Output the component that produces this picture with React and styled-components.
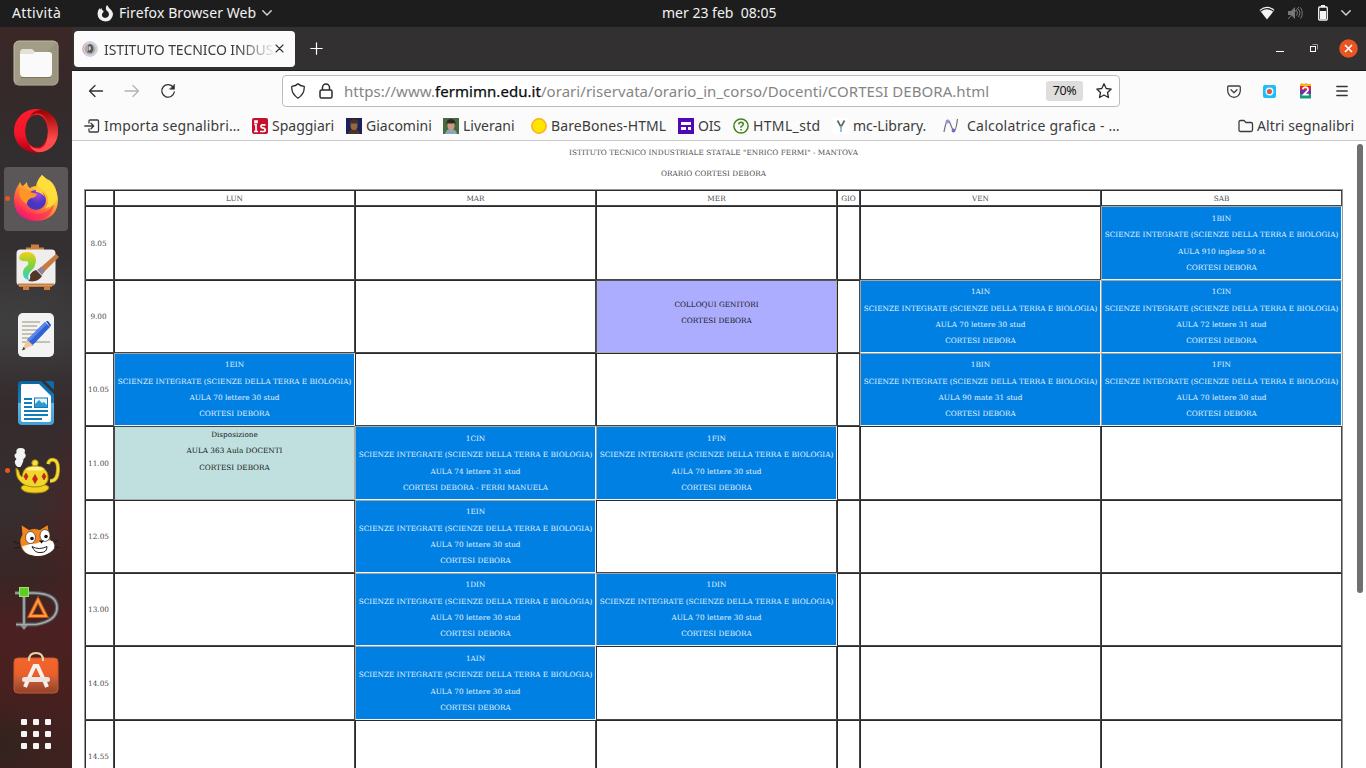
import React from "react";
import styled, { createGlobalStyle } from "styled-components";

const Global = createGlobalStyle`
  * { box-sizing: border-box; }
  body { margin: 0; overflow: hidden; background: #fff; }
  svg { display: block; flex: none; }
`;

const Desktop = styled.div`
  width: 1366px;
  height: 768px;
  display: flex;
  flex-direction: column;
  overflow: hidden;
  font-family: "Noto Sans", "Open Sans", sans-serif;
`;

/* Fixed-advance label: w reserves the slot, size and ls tune the face */
const Label = styled.span`
  display: block;
  flex: none;
  width: ${(p) => p.$w}px;
  font-size: ${(p) => p.$size || 14}px;
  letter-spacing: ${(p) => p.$ls || 0}px;
  line-height: 20px;
  white-space: pre;
  color: ${(p) => p.$color || "inherit"};
`;

const Spacer = styled.span`
  flex: none;
  width: ${(p) => p.$w}px;
`;

const TopBar = styled.header`
  height: 27px;
  flex: none;
  display: flex;
  align-items: center;
  background: #1d1d1d;
  color: #f2f2f2;
  padding: 0 15px 1px 12px;
`;
const AppMenu = styled.div`
  display: flex;
  align-items: center;
  gap: 5px;
  margin-left: 34px;
`;
const Clock = styled.div`
  display: flex;
  margin-left: 390px;
`;
const Tray = styled.div`
  display: flex;
  align-items: center;
  margin-left: auto;
`;

const Workspace = styled.div`
  display: flex;
  flex: 1;
  min-height: 0;
`;

const Dock = styled.nav`
  width: 72px;
  flex: none;
  display: flex;
  flex-direction: column;
  align-items: center;
  padding-top: 4px;
  gap: 4px;
  background:
    radial-gradient(ellipse 50px 40px at 0px 715px, rgba(40, 36, 28, 0.6), transparent),
    radial-gradient(ellipse 50px 100px at 80px 490px, rgba(110, 20, 20, 0.35), transparent),
    radial-gradient(ellipse 90px 70px at 20px 290px, rgba(80, 85, 85, 0.3), transparent),
    linear-gradient(#3b2827 0, #352929 60px, #322d2e 120px, #343032 220px, #3a3738 310px, #352b2d 380px, #372e30 480px, #3a2525 550px, #4c2022 600px, #47201f 660px, #3c2220 741px);
`;
const DockItem = styled.div`
  position: relative;
  width: 64px;
  height: ${(p) => p.$h || 64}px;
  flex: none;
  display: flex;
  align-items: center;
  justify-content: center;
  border-radius: 4px;
  background: ${(p) => (p.$active ? "#5b5657" : "transparent")};
`;
const RunningDot = styled.i`
  position: absolute;
  left: 0.5px;
  top: 29px;
  width: 5px;
  height: 5px;
  border-radius: 50%;
  background: #e95420;
`;

const Browser = styled.main`
  flex: 1;
  min-width: 0;
  display: flex;
  flex-direction: column;
  background: #fff;
`;
const TabStrip = styled.div`
  height: 44px;
  flex: none;
  display: flex;
  align-items: center;
  padding: 0 8px 0 2px;
  background: #323031;
  border-bottom: 1px solid #1c1a1e;
  color: #fff;
`;
const Tab = styled.div`
  width: 221px;
  height: 36px;
  display: flex;
  align-items: center;
  padding: 0 11px 0 8px;
  border-radius: 4px;
  background: #fbfbfb;
  color: #3d3d3d;
`;
const TabTitle = styled.div`
  width: 169px;
  margin: 0 2px 0 6px;
  padding-top: 2px;
  overflow: hidden;
  mask-image: linear-gradient(90deg, #000 135px, transparent 172px);
`;
const NewTab = styled.div`
  margin-left: 15px;
`;
const WindowButtons = styled.div`
  display: flex;
  align-items: center;
  margin-left: auto;
`;
const Toolbar = styled.div`
  height: 41px;
  flex: none;
  display: flex;
  align-items: center;
  padding: 0 18px 1px 16px;
  background: #fbfbfb;
`;
const UrlBar = styled.div`
  width: 838px;
  height: 32px;
  margin-left: 106px;
  display: flex;
  align-items: center;
  padding: 0 7px 0 8px;
  border: 1px solid #bcbcbc;
  border-radius: 4px;
  background: #fff;
`;
const UrlText = styled.div`
  width: 702px;
  margin-left: 11px;
  font-size: 15px;
  line-height: 20px;
  letter-spacing: 0.045px;
  white-space: pre;
  color: #858585;
  b { font-weight: 400; color: #0c0c0d; -webkit-text-stroke: 0.25px #0c0c0d; }
`;
const ZoomBadge = styled.div`
  width: 37px;
  height: 20px;
  border-radius: 3px;
  background: #dedede;
  color: #151515;
  font-size: 12.5px;
  line-height: 20px;
  text-align: center;
  letter-spacing: -0.4px;
`;
const Bookmarks = styled.div`
  height: 29px;
  flex: none;
  display: flex;
  align-items: center;
  padding: 0 0 1px 12px;
  background: #fbfbfb;
  color: #3b3b3b;
`;
const Divider = styled.div`
  height: 1px;
  flex: none;
  background: #c8c8c8;
  margin-top: -1px;
  position: relative;
`;
const Bookmark = styled.div`
  display: flex;
  align-items: center;
  flex: none;
  gap: ${(p) => p.$gap ?? 4}px;
  margin-left: ${(p) => p.$ml || 0}px;
`;

const Page = styled.section`
  flex: 1;
  min-height: 0;
  position: relative;
  overflow: hidden;
  padding: 0 23px 0 12px;
  background: #fff;
  font-family: "DejaVu Serif", serif;
  font-size: 7.3px;
  color: #4a4a4a;
`;
const Heading = styled.p`
  margin: 0;
  height: 21px;
  line-height: 23px;
  text-align: center;
  letter-spacing: 0.04px;
`;
const Grid = styled.div`
  width: 1259px;
  margin-top: 6px;
  display: grid;
  grid-template-columns: 29px 241px 241px 241px 23px 241px 241px;
  grid-template-rows: 16px 74px 73px 73px 74px 73px 73px 74px 73px;
  border: 1px solid #999;
`;
const kinds = {
  empty: { bg: "#fff", fg: "#4a4a4a", tl: "#2a2a2a", br: "#474747" },
  lesson: { bg: "#0080e3", fg: "#e4f3ff", tl: "#a5a5a5", br: "#f4f4f4" },
  talk: { bg: "#adadff", fg: "#151515", tl: "#555", br: "#aaa" },
  standby: { bg: "#c0e0df", fg: "#151515", tl: "#444", br: "#aaa" },
};
const Cell = styled.div`
  display: flex;
  flex-direction: column;
  align-items: center;
  justify-content: ${(p) => (p.$kind === "standby" ? "flex-start" : "center")};
  padding: ${(p) => (p.$kind === "standby" || p.$time ? 0 : 1)}px ${(p) => (p.$time ? 2 : 0)}px ${(p) => (p.$kind === "talk" ? 8 : 0)}px 0;
  line-height: ${(p) => (p.$kind === "empty" ? 13 : 16.4)}px;
  white-space: nowrap;
  background: ${(p) => kinds[p.$kind].bg};
  color: ${(p) => kinds[p.$kind].fg};
  border: 1px solid;
  border-color: ${(p) => `${kinds[p.$kind].tl} ${kinds[p.$kind].br} ${kinds[p.$kind].br} ${kinds[p.$kind].tl}`};
`;
const Scrollbar = styled.div`
  position: absolute;
  right: 3px;
  top: 3px;
  width: 6px;
  height: 449px;
  border-radius: 3px;
  background: #707070;
`;

const SUBJECT = "SCIENZE INTEGRATE (SCIENZE DELLA TERRA E BIOLOGIA)";
const lesson = (cls, room, who = "CORTESI DEBORA") => ({ kind: "lesson", lines: [cls, SUBJECT, room, who] });
const R70 = "AULA 70 lettere 30 stud";
const rows = [
  ["8.05", null, null, null, null, null, lesson("1BIN", "AULA 910 inglese 50 st")],
  ["9.00", null, null, { kind: "talk", lines: ["COLLOQUI GENITORI", "CORTESI DEBORA"] }, null, lesson("1AIN", R70), lesson("1CIN", "AULA 72 lettere 31 stud")],
  ["10.05", lesson("1EIN", R70), null, null, null, lesson("1BIN", "AULA 90 mate 31 stud"), lesson("1FIN", R70)],
  ["11.00", { kind: "standby", lines: ["Disposizione", "AULA 363 Aula DOCENTI", "CORTESI DEBORA"] }, lesson("1CIN", "AULA 74 lettere 31 stud", "CORTESI DEBORA - FERRI MANUELA"), lesson("1FIN", R70), null, null, null],
  ["12.05", null, lesson("1EIN", R70), null, null, null, null],
  ["13.00", null, lesson("1DIN", R70), lesson("1DIN", R70), null, null, null],
  ["14.05", null, lesson("1AIN", R70), null, null, null, null],
  ["14.55", null, null, null, null, null, null],
];

/* ---------- dock icons ---------- */
const Files = () => (
  <svg width="46" height="46" viewBox="0 0 46 46">
    <rect x="1" y="1" width="44" height="44" rx="5" fill="#a39c86" stroke="#c3bda9" />
    <path d="M1 45L45 1v40q0 4-4 4z" fill="#968f79" opacity=".6" />
    <path d="M7 13q0-4 3-4h8q2 0 3 2l2 2h13q3 0 3 3v8H7z" fill="#e3e0d5" />
    <path d="M7 14h12q2 0 3-2h14q3 0 3 3v18q0 4-4 4H11q-4 0-4-4z" fill="#fbfafa" />
    <path d="M8 37.5h30" stroke="#7d7765" strokeWidth="1" />
  </svg>
);
const Opera = () => (
  <svg width="46" height="46" viewBox="0 0 46 46">
    <defs>
      <linearGradient id="op1" x1="0" y1="0" x2="0" y2="1"><stop offset="0" stopColor="#ff1b2d" /><stop offset=".6" stopColor="#f3152a" /><stop offset="1" stopColor="#a70014" /></linearGradient>
      <linearGradient id="op2" x1="0" y1="0" x2="0" y2="1"><stop offset="0" stopColor="#9c0000" /><stop offset=".7" stopColor="#ff4b4b" /></linearGradient>
    </defs>
    <path fillRule="evenodd" d="M23 1a22 22 0 1 1 0 44a22 22 0 1 1 0-44zM23.500 7C16 7 12.500 15 12.500 23S16 39 23.500 39 34.500 31 34.500 23 31 7 23.500 7z" fill="url(#op1)" />
    <path d="M16 10Q21 4 28 6 35 9 35 23T28 40Q21 42 16 36 20 46 30 43.800 45 39 45 23T30 2.200Q20 1 16 10z" fill="url(#op2)" />
    <path d="M23.500 7C16 7 12.500 15 12.500 23S16 39 23.500 39 34.500 31 34.500 23 31 7 23.500 7z" fill="#332d2e" />
  </svg>
);
const Firefox = () => (
  <svg width="48" height="48" viewBox="0 0 48 48">
    <defs>
      <linearGradient id="ff1" x1=".85" y1=".1" x2=".25" y2="1"><stop offset="0" stopColor="#fff14a" /><stop offset=".35" stopColor="#ffbd30" /><stop offset=".6" stopColor="#ff7139" /><stop offset=".85" stopColor="#ff2f58" /><stop offset="1" stopColor="#d9109a" /></linearGradient>
      <radialGradient id="ff2" cx=".6" cy=".2"><stop offset="0" stopColor="#a148e8" /><stop offset="1" stopColor="#4b35bf" /></radialGradient>
    </defs>
    <g transform="translate(0 -1)">
      <path d="M30 1q4 3 6 8 1-1 1-3 8 8 9 19 0 21-22 22Q2 46 2 25q0-8 5-15l1-2q1 3 3 4l4-4q0 4 3 6 3-2 6-2 1-6 6-11z" fill="url(#ff1)" />
      <path d="M30 1q-5 6-4 12 8 3 10 10 1 8-3 11 10-1 12-10 0-13-8-18Q33 4 30 1z" fill="#ffdf3c" opacity=".9" />
      <circle cx="24" cy="26" r="10" fill="url(#ff2)" />
      <path d="M24 14q7 0 9 5l-3-1 3 5q-5-5-9-5z" fill="#ffcf3a" />
      <path d="M7 17q6-4 11 1l7 2q-1 4-6 4-4 2-4 6-8-4-8-13z" fill="#ff9526" />
      <path d="M5 28q4 11 18 12 13 0 19-10-3 16-19 16Q7 44 5 28z" fill="#f8255f" opacity=".55" />
    </g>
  </svg>
);
const Paint = () => (
  <svg width="46" height="48" viewBox="0 0 46 48">
    <defs><linearGradient id="pt" x1="0" y1="0" x2="0" y2="1"><stop offset="0" stopColor="#f4cf16" /><stop offset=".5" stopColor="#7ad33b" /><stop offset="1" stopColor="#1fd5dd" /></linearGradient></defs>
    <path d="M18 1.500h8v3h5v3H13v-3h5zM6 41h33v3h-2v3h-6v-3H16v3h-6v-3H6z" fill="#c97e42" />
    <rect x="3.500" y="6.500" width="39" height="36" rx="4" fill="#f0eeec" />
    <path d="M5 41.500h36" stroke="#c97e42" strokeWidth="2" />
    <path d="M6 15Q7 9 14 9q8 0 9 8 0 7-6 12-3 4-1 8-6-1-6-7 0-5 5-8 1-4-2-4-5 1-7-3z" fill="url(#pt)" />
    <path d="M43 11l3 3-15 15-4-4z" fill="#c67b43" />
    <path d="M28 24l4 4-3 4-5-5z" fill="#888499" />
    <path d="M23 27l6 6q-4 7-14 5 3-2 2-6 2-4 6-5z" fill="#513629" />
  </svg>
);
const Editor = () => (
  <svg width="38" height="46" viewBox="0 0 38 46">
    <rect x="1" y="1" width="36" height="44" rx="5" fill="#f4f3f3" />
    <path d="M5 10h18M5 14h15M5 18h18M5 22h14M5 26h10M5 30h28" stroke="#c4c1b5" strokeWidth="1.8" />
    <path d="M28 10l5 5-18 19-5-6z" fill="#2f62d5" />
    <path d="M28 10l2 2-18 18-2-2z" fill="#5a87ed" />
    <path d="M10 28l6 5-11 5z" fill="#f4c594" /><path d="M6.500 35l2 2-3.500 1.500z" fill="#333" />
    <path d="M29 9l2 0 3 4-1 2z" fill="#2448a8" />
  </svg>
);
const Writer = () => (
  <svg width="38" height="46" viewBox="0 0 38 46">
    <defs><linearGradient id="wr" x1="0" y1="0" x2="0" y2="1"><stop offset="0" stopColor="#0b67a4" /><stop offset=".5" stopColor="#1480bd" /><stop offset=".51" stopColor="#64b4df" /><stop offset="1" stopColor="#3fa0d5" /></linearGradient></defs>
    <path d="M4 1h20l13 13v27q0 4-4 4H5q-4 0-4-4V5q0-4 3-4z" fill="url(#wr)" />
    <path d="M5 4h17l12 12v24q0 2-2 2H6q-2 0-2-2V6q0-2 1-2z" fill="#fff" />
    <path d="M28 1h7q2 0 2 2v7z" fill="#0c6ba8" />
    <path d="M7 19h8M7 23h8M7 27h8M7 31h24M7 35h24M7 39h18" stroke="#107cb8" strokeWidth="2" />
    <rect x="17.500" y="18" width="13" height="9.500" fill="#e9f5fc" stroke="#107cb8" />
    <path d="M18 27v-3l4-4 3 3 2-1 3 3v2z" fill="#2c99d1" />
  </svg>
);
const Teapot = () => (
  <svg width="48" height="48" viewBox="0 0 48 48">
    <path d="M4 20q-5-5 -1-8-4-4 0-6-1-5 4-5 6 0 4 5 3 3-1 6 0 3-3 8z" fill="#f3f3f3" transform="translate(1.500 0)" />
    <path d="M36 17q1-5 6-4 4 1 4 9 0 12-8 12" fill="none" stroke="#a88e0c" strokeWidth="4" />
    <path d="M36 17q1-5 6-4 4 1 4 9 0 12-8 12" fill="none" stroke="#f3db3b" strokeWidth="2.500" />
    <path d="M9 41q0-4 14-4t14 4q-2 5-14 5T9 41z" fill="#f0d322" stroke="#a18707" />
    <path d="M4 21q3 1 4 7l2 2q1-8 6-10 7-3 14 0 7 4 6 13-2 7-13 7-11 0-16-7-3-3-3-12z" fill="#f1d42c" stroke="#a18707" />
    <path d="M14 21.500q9-4 18 0l-2 2H15z" fill="#fff08e" /><circle cx="23" cy="16" r="3.200" fill="#f6df43" stroke="#a18707" />
    <path d="M14 26l2 3.500-2 3.500-2-3.500zM23 27.500l2.500 4.500-2.500 4.500-2.500-4.500zM32 26l2 3.500-2 3.500-2-3.500z" fill="#db1827" stroke="#8b3010" strokeWidth=".6" />
  </svg>
);
const Scratch = () => (
  <svg width="48" height="40" viewBox="0 -1.500 48 40">
    <path d="M1 21l9 3M2 28l8-2M46 20l-7 3M47 27l-8-1" stroke="#1c1a1a" />
    <path d="M9 4l8 5q5-2 11 0l8-5 2 14q6 6 2 12-6 7-17 6Q9 34 8 23q-1-4 2-9z" fill="#f7851d" stroke="#252020" strokeWidth=".8" />
    <path d="M10 26q8-3 14-3 12-5 17-2 4 7-3 11-8 5-16 3Q12 34 10 26z" fill="#fff" />
    <ellipse cx="18.500" cy="17" rx="5" ry="6" fill="#fff" stroke="#333" strokeWidth=".7" /><ellipse cx="33" cy="15" rx="5" ry="6" fill="#fff" stroke="#333" strokeWidth=".7" />
    <circle cx="20" cy="18" r="1.800" fill="#111" /><circle cx="34" cy="16" r="1.800" fill="#111" />
    <path d="M27 20l5 0-2.500 3z" fill="#111" />
    <path d="M20 26q7 4 15 0 0 6-6 6-6 1-9-6z" fill="#fff" stroke="#222" />
  </svg>
);
const Dia = () => (
  <svg width="48" height="48" viewBox="0 0 48 48">
    <path d="M3 10h20q22 1 22 14.500T24 41.500H4M12 6v36" fill="none" stroke="#555b5b" strokeWidth="4" />
    <path d="M3 10h20q22 1 22 14.500T24 41.500H4M12 6v36" fill="none" stroke="#a5adad" strokeWidth="1.700" />
    <path d="M8 42h8l-4 5z" fill="#8c9494" />
    <rect x="7.500" y="4.500" width="9" height="9" fill="#62c927" stroke="#97ea69" />
    <path d="M26 17l8 16H18z" fill="none" stroke="#bd5511" strokeWidth="4" /><path d="M26 17l8 16H18z" fill="none" stroke="#ff9a40" strokeWidth="2" />
  </svg>
);
const Software = () => (
  <svg width="46" height="46" viewBox="0 3 46 46">
    <defs><linearGradient id="sw" x1="0" y1="0" x2="0" y2="1"><stop offset="0" stopColor="#f2672e" /><stop offset=".51" stopColor="#ec5e27" /><stop offset=".52" stopColor="#d4623b" /><stop offset="1" stopColor="#914327" /></linearGradient></defs>
    <rect x="1" y="9" width="44" height="35" rx="4" fill="url(#sw)" stroke="#c95a30" />
    <path d="M16 12v-1q0-7 7-7t7 7v1" fill="none" stroke="#ead5aa" strokeWidth="2" />
    <path d="M15.500 30l6-13h3l6 13M12 38l2.500-6M34 38l-2.500-6" fill="none" stroke="#f5f1f1" strokeWidth="4" />
    <rect x="9" y="28" width="28" height="5" rx="2.500" fill="#f1e4df" />
  </svg>
);
const AppGrid = () => (
  <svg width="32" height="32" viewBox="0 0 32 32">
    {[1, 13, 25].map((y) => [1, 13, 25].map((x) => <rect key={x + "-" + y} x={x} y={y} width="6" height="6" rx="1" fill="#f4f4f4" />))}
  </svg>
);
const dock = [
  { Icon: Files }, { Icon: Opera }, { Icon: Firefox, active: true, running: true }, { Icon: Paint }, { Icon: Editor }, { Icon: Writer },
  { Icon: Teapot, running: true }, { Icon: Scratch }, { Icon: Dia }, { Icon: Software }, { Icon: AppGrid, h: 46 },
];

/* ---------- small icons ---------- */
const Line = ({ w = 16, h = w, d, color = "#303030", sw = 1.3, children }) => (
  <svg width={w} height={h} viewBox={`0 0 ${w} ${h}`} fill="none" stroke={color} strokeWidth={sw} strokeLinecap="round" strokeLinejoin="round">
    {d && <path d={d} />}
    {children}
  </svg>
);
const FoxMono = () => (
  <svg width="17" height="17" viewBox="0 0 17 17">
    <path d="M10 0q1 1 2 3 4 3 4 6.500Q15 16 8.500 16.500 1 16 .5 9 .5 6 2.500 3L3 4.500 4.500 3q0 2 2 3Q7 7 5.500 8q-2 4 2.500 5 4-.5 4-4-.5-3-2.500-3.500Q8 3 10 0z" fill="#f0f0f0" />
  </svg>
);
const Chevron = () => <Line w={10} h={6} d="M.8.8L5 5 9.200.8" color="#d8d8d8" sw={1.4} />;

const Photo = ({ bg, shirt, skin, hair }) => (
  <svg width="16" height="16" viewBox="0 0 16 16">
    <rect width="16" height="16" fill={bg} />
    <path d="M2 16q1-5 6-5t6 5z" fill={shirt} />
    <ellipse cx="8" cy="7.500" rx="3.500" ry="4.500" fill={skin} />
    <path d="M3.500 7Q3 1 8 1t4.500 6l-1-2q-4 1-7 0z" fill={hair} />
  </svg>
);

export default function App() {
  return (
    <Desktop>
      <Global />
      <TopBar>
        <Label $w={51} $ls={0.35}>Attività</Label>
        <AppMenu>
          <FoxMono />
          <Label $w={138} $ls={0.1}>Firefox Browser Web</Label>
          <Chevron />
        </AppMenu>
        <Clock><Label $w={116}>mer 23 feb  08:05</Label></Clock>
        <Tray>
          <svg width="16" height="14" viewBox="0 0 16 14"><path d="M.5 4Q8-2.500 15.500 4L8 13.500z" fill="#f4f4f4" /><path d="M1.500 5.200Q8-.1 14.500 5.200" fill="none" stroke="#1d1d1d" strokeWidth="1.200" /></svg>
          <Spacer $w={12} />
          <svg width="16" height="14" viewBox="0 0 16 14"><path d="M1 5h3l4-4v12L4 9H1z" fill="#777" /><path d="M9.500 4.500q2 2.500 0 5M11.500 3q3 4 0 8M13.500 1.500q3.500 5.500 0 11M1 13L12 1" fill="none" stroke="#777" /></svg>
          <Spacer $w={15} />
          <svg width="10" height="16" viewBox="0 0 10 16"><path d="M3 0h4v2H3z" fill="#f4f4f4" /><rect x=".7" y="2" width="8.600" height="13" rx="1" fill="none" stroke="#f4f4f4" strokeWidth="1.300" /><path d="M2 6h6v8H2z" fill="#f4f4f4" /></svg>
          <Spacer $w={13} />
          <Chevron />
        </Tray>
      </TopBar>
      <Workspace>
        <Dock>
          {dock.map(({ Icon, active, running, h }, i) => (
            <DockItem key={i} $active={active} $h={h}>
              {running && <RunningDot />}
              <Icon />
            </DockItem>
          ))}
        </Dock>
        <Browser>
          <TabStrip>
            <Tab>
              <svg width="16" height="16" viewBox="0 0 16 16"><circle cx="8" cy="8" r="7.300" fill="#d9d9d9" stroke="#c0c4e4" /><path d="M3 13A7.300 7.300 0 0 1 4 2" fill="none" stroke="#eea3a3" /><circle cx="8" cy="8" r="5.500" fill="#aaa" /><path d="M6 4q4-2 5 2 1 4-2 6l-4-1q3-2 1-7z" fill="#555" /><path d="M7 5q2 0 2 3l-2 2z" fill="#ccc" /></svg>
              <TabTitle><Label $w={169} $ls={-0.1}>ISTITUTO TECNICO INDUSTRIALE</Label></TabTitle>
              <Line w={9} d="M1 1l7 7M8 1L1 8" color="#333" sw={1.1} />
            </Tab>
            <NewTab><Line w={13} d="M6.500.8v11.400M.8 6.500h11.400" color="#fff" sw={1.2} /></NewTab>
            <WindowButtons>
              <svg width="10" height="6" viewBox="0 0 10 6"><path d="M1 5h8v1H1z" fill="#fff" /></svg>
              <Spacer $w={24} />
              <svg width="10" height="9" viewBox="0 0 10 9" fill="none"><path d="M3.500.5h5v5" stroke="#999" /><rect x="1.500" y="2.500" width="5" height="5" stroke="#fff" /></svg>
              <Spacer $w={20} />
              <svg width="19" height="19" viewBox="0 0 19 19"><circle cx="9.500" cy="9.500" r="9.300" fill="#e95420" /><path d="M6 6l7 7M13 6l-7 7" stroke="#fff" strokeWidth="1.600" /></svg>
            </WindowButtons>
          </TabStrip>
          <Toolbar>
            <Line w={16} h={14} d="M14.500 7H1.500M7 1.500L1.500 7 7 12.500" />
            <Spacer $w={20} />
            <Line w={16} h={14} d="M1 7h13.500M9 1.500L14.500 7 9 12.500" color="#b3b3b3" />
            <Spacer $w={20} />
            <Line w={16} h={16}><path d="M13.300 4.300A6.300 6.300 0 1 0 14.300 9" /><path d="M14.500 1.500v4.700H9.800z" fill="#303030" strokeWidth=".6" /></Line>
            <UrlBar>
              <Line w={14} h={16} d="M7 .8Q9 3 13.200 3.400 13.800 11 7 15.200.2 11 .8 3.400 5 3 7 .8z" color="#2b2b2b" />
              <Spacer $w={14} />
              <Line w={14} h={16} d="M3.500 7V4.500a3.500 3.500 0 0 1 7 0V7M2.500 7h9q1.500 0 1.500 1.500v5q0 1.500-1.500 1.500h-9Q1 15 1 13.500v-5Q1 7 2.500 7z" color="#2b2b2b" sw={1.5} />
              <UrlText>https://www.<b>fermimn.edu.it</b>/orari/riservata/orario_in_corso/Docenti/CORTESI DEBORA.html</UrlText>
              <ZoomBadge>70%</ZoomBadge>
              <Spacer $w={13} />
              <Line w={16} d="M8 .8l2.200 4.700 5 .6-3.700 3.400 1 5L8 12l-4.500 2.500 1-5L.8 6.100l5-.6z" color="#2b2b2b" />
            </UrlBar>
            <Spacer $w={107} />
            <Line w={14} h={13} d="M2 1h10q1.300 0 1.300 1.300V6Q12.500 12 7 12.300 1.500 12 .7 6V2.300Q.7 1 2 1zM4 4.800l3 2.900 3-2.900" color="#404040" />
            <Spacer $w={22} />
            <svg width="13" height="13" viewBox="0 0 13 13"><rect width="13" height="13" rx="2" fill="#19bff5" /><circle cx="6.500" cy="6.500" r="4" fill="#dff6ff" /><circle cx="6.500" cy="6.500" r="2.600" fill="#e8533a" /></svg>
            <Spacer $w={23} />
            <svg width="13" height="16" viewBox="0 0 13 16"><path d="M1 1l2-1 2 1 2-1 2 1h3v3H1z" fill="#f7b916" /><path d="M1 3h11v4H1z" fill="#e3203c" /><path d="M1 7h11v4H1z" fill="#6a35a0" /><path d="M1 11h11v4.500H1z" fill="#179a78" /><path d="M3.800 6.200Q4.300 4.200 6.500 4.200q3.300.4 2.300 3.300L4.800 11.600h5" fill="none" stroke="#fff" strokeWidth="1.800" /></svg>
            <Spacer $w={24} />
            <Line w={12} h={12} d="M.8 1.500h10.400M.8 6h10.400M.8 10.500h10.400" color="#333" />
          </Toolbar>
          <Bookmarks>
            <Bookmark>
              <Line w={16} d="M.8 8h8.700M7 5.300L9.700 8 7 10.700M5 5V3q0-1 1-1h7.500q1 0 1 1v10q0 1-1 1H6q-1 0-1-1v-2" color="#3b3b3b" />
              <Label $w={136} $ls={0.16}>Importa segnalibri…</Label>
            </Bookmark>
            <Bookmark $ml={12}>
              <svg width="16" height="16" viewBox="0 0 16 16"><rect width="16" height="16" rx="2" fill="#c5112b" /><path d="M2.200 6.500H4v7M2 13.500h4M3 3h2v1.500H3zM13.500 6.800h-3.300Q7.800 8 9.800 9.700l2.500.6q2.200 2-.3 3.200H8" fill="none" stroke="#fff" strokeWidth="1.700" /></svg>
              <Label $w={62}>Spaggiari</Label>
            </Bookmark>
            <Bookmark $ml={12}>
              <Photo bg="#1c205c" shirt="#4a351f" skin="#94693f" hair="#443321" />
              <Label $w={65}>Giacomini</Label>
            </Bookmark>
            <Bookmark $ml={12}>
              <Photo bg="#466b3f" shirt="#8fa3b9" skin="#cc9a80" hair="#30272a" />
              <Label $w={52}>Liverani</Label>
            </Bookmark>
            <Bookmark $ml={16}>
              <svg width="16" height="16" viewBox="0 0 16 16"><circle cx="8" cy="8" r="7.200" fill="#ffe600" stroke="#ffad22" strokeWidth="1.500" /></svg>
              <Label $w={116} $ls={0.1}>BareBones-HTML</Label>
            </Bookmark>
            <Bookmark $ml={11}>
              <svg width="16" height="16" viewBox="0 0 16 16"><rect width="16" height="16" fill="#5208b5" /><path d="M3 4h10v3H3zM3 9h5v3H3zM10 9h3v3h-3z" fill="#fff" /></svg>
              <Label $w={24} $ls={-0.2}>OIS</Label>
            </Bookmark>
            <Bookmark $ml={11}>
              <svg width="16" height="16" viewBox="0 0 16 16" fill="none" stroke="#3f8418" strokeWidth="1.500"><circle cx="8" cy="8" r="7.100" /><path d="M5.700 6.300q.3-2 2.300-2 2.300.1 2.300 2Q10.300 7.500 8 8.600v1.200" /><path d="M8 11v1.600" /></svg>
              <Label $w={67} $ls={0.35}>HTML_std</Label>
            </Bookmark>
            <Bookmark $ml={13}>
              <svg width="16" height="16" viewBox="0 0 16 16"><rect width="16" height="16" fill="#fff" /><path d="M4.500 2.500L8 9l3.500-6.500" fill="none" stroke="#666" strokeWidth="1.700" /><path d="M8 8v6" stroke="#74bdd6" strokeWidth="1.700" /></svg>
              <Label $w={74}>mc-Library.</Label>
            </Bookmark>
            <Bookmark $ml={16} $gap={8}>
              <svg width="16" height="16" viewBox="0 0 16 16"><path d="M1 14Q4-3 7 5t4 8q2 0 3.500-12" fill="none" stroke="#777" strokeWidth="1.300" /><circle cx="4.500" cy="3.500" r="1.900" fill="#9c91df" /><circle cx="10.500" cy="12.500" r="1.900" fill="#7569c8" /></svg>
              <Label $w={154} $ls={0.22}>Calcolatrice grafica - …</Label>
            </Bookmark>
            <Bookmark $ml={117} $gap={3}>
              <Line w={16} h={14} d="M1 3q0-1.500 1.500-1.500H6L8 3.500h5q1.500 0 1.500 1.500v6q0 1.500-1.500 1.500H2.500Q1 12.500 1 11z" color="#3b3b3b" />
              <Label $w={98} $ls={0.1}>Altri segnalibri</Label>
            </Bookmark>
          </Bookmarks>
          <Divider />
          <Page>
            <Heading>ISTITUTO TECNICO INDUSTRIALE STATALE "ENRICO FERMI" - MANTOVA</Heading>
            <Heading>ORARIO CORTESI DEBORA</Heading>
            <Grid>
              {["", "LUN", "MAR", "MER", "GIO", "VEN", "SAB"].map((d) => <Cell key={d} $kind="empty">{d}</Cell>)}
              {rows.map((r) => r.map((c, i) => {
                if (!c || typeof c === "string") return <Cell key={r[0] + i} $kind="empty" $time={i === 0}>{c}</Cell>;
                return <Cell key={r[0] + i} $kind={c.kind}>{c.lines.map((l) => <div key={l}>{l}</div>)}</Cell>;
              }))}
            </Grid>
            <Scrollbar />
          </Page>
        </Browser>
      </Workspace>
    </Desktop>
  );
}
